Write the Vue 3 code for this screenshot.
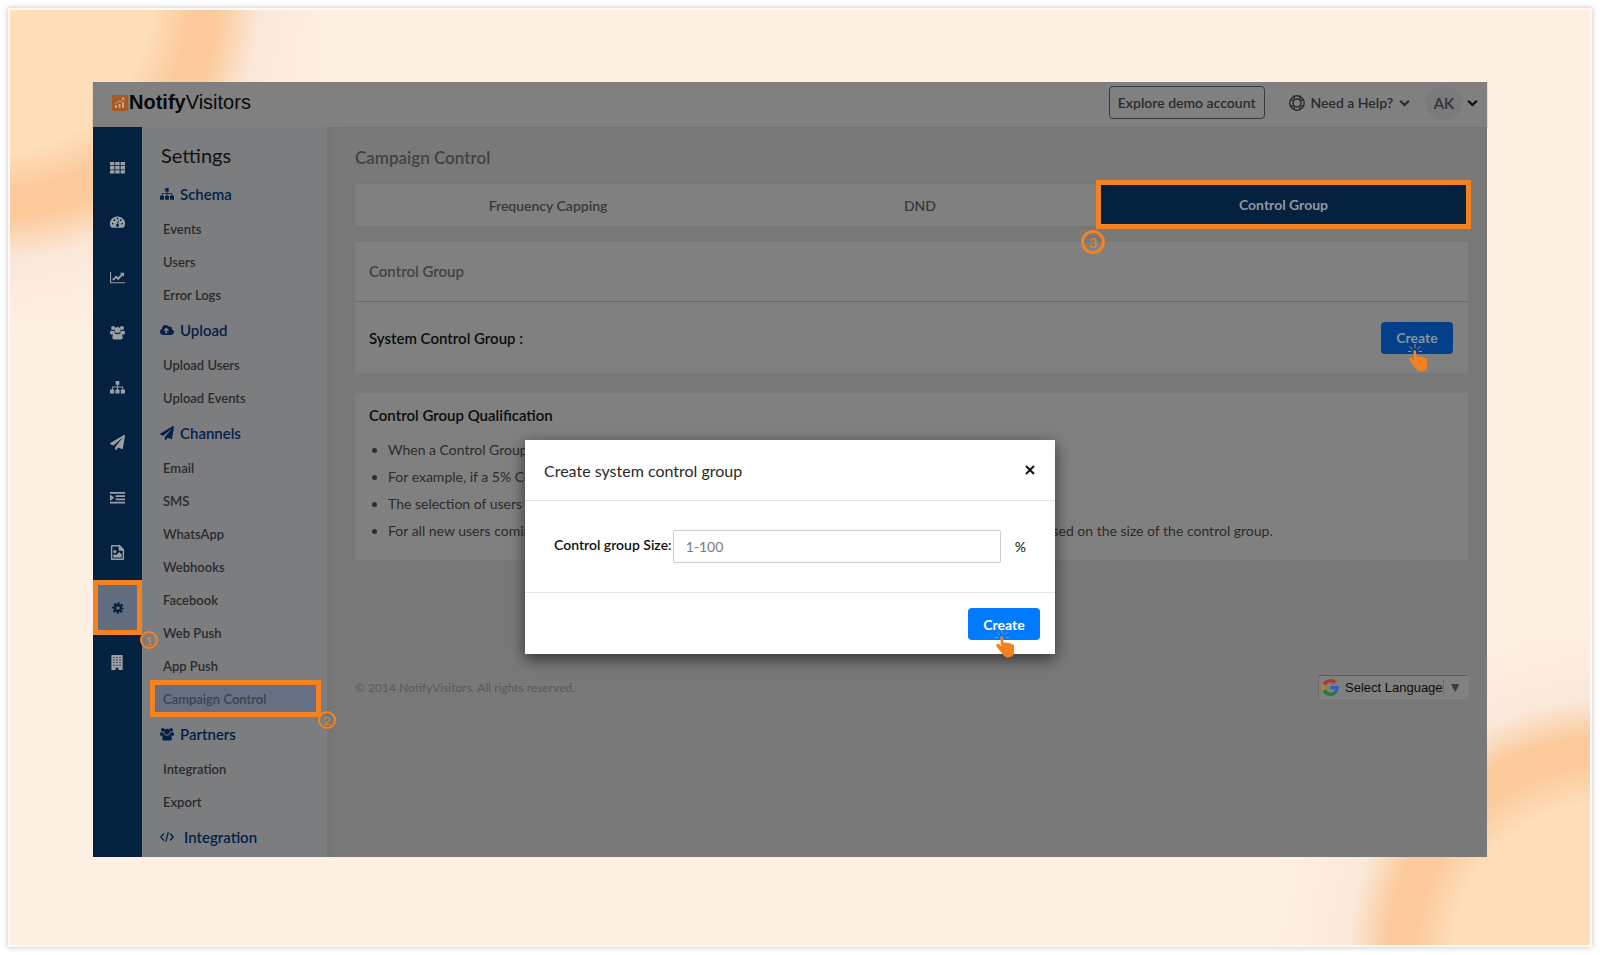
<script setup>
import { ref } from "vue";

const railItems = [
  { icon: "grid", label: "Apps" },
  { icon: "gauge", label: "Dashboard" },
  { icon: "chart", label: "Analytics" },
  { icon: "users", label: "Users" },
  { icon: "sitemap", label: "Segments" },
  { icon: "plane", label: "Campaigns" },
  { icon: "indent", label: "Journeys" },
  { icon: "image", label: "Content" },
  { icon: "gear", label: "Settings" },
  { icon: "building", label: "Company" },
];

const menu = [
  { title: "Schema", icon: "sitemap", items: ["Events", "Users", "Error Logs"] },
  { title: "Upload", icon: "cloud", items: ["Upload Users", "Upload Events"] },
  {
    title: "Channels",
    icon: "plane",
    items: [
      "Email",
      "SMS",
      "WhatsApp",
      "Webhooks",
      "Facebook",
      "Web Push",
      "App Push",
      "Campaign Control",
    ],
  },
  { title: "Partners", icon: "users", items: ["Integration", "Export"] },
  { title: "Integration", icon: "code", items: [] },
];

const tabs = ["Frequency Capping", "DND", "Control Group"];

const activeRail = ref("gear");
const activeItem = ref("Campaign Control");
const activeTab = ref("Control Group");
const showDialog = ref(true);
const groupSize = ref("");
const language = ref("Select Language");
</script>

<template>
  <svg class="sprite" aria-hidden="true">
    <symbol id="grid" viewBox="0 0 16 16">
      <path d="M0 2h4.700v3.500H0zM5.600 2h4.700v3.500H5.600zM11.300 2H16v3.500h-4.700zM0 6.500h4.700V10H0zM5.600 6.500h4.700V10H5.600zM11.300 6.500H16V10h-4.700zM0 11h4.700v3.500H0zM5.600 11h4.700v3.500H5.600zM11.300 11H16v3.500h-4.700z" />
    </symbol>
    <symbol id="gauge" viewBox="0 0 16 16">
      <path fill-rule="evenodd" d="M8 1.500a8 7.600 0 0 0-7 11.400q.4.700 1 .7h12q.6 0 1-.7A8 7.600 0 0 0 8 1.500zM3 8.200a.9.900 0 1 1 0 1.800.9.900 0 0 1 0-1.800zM4.600 4.600a.9.900 0 1 1 0 1.800.9.900 0 0 1 0-1.800zM8 2.900a.9.900 0 1 1 0 1.800.9.900 0 0 1 0-1.800zM11.500 4.600a.9.900 0 1 1 0 1.800.9.900 0 0 1 0-1.800zM13 8.200a.9.900 0 1 1 0 1.800.9.900 0 0 1 0-1.800zM8.600 5.800l.9.200-.8 3.700a1.500 1.500 0 1 1-1-.2z" />
    </symbol>
    <symbol id="chart" viewBox="0 0 16 16">
      <path d="M0 2h1.200v11H16v1.200H0z" />
      <path d="M3 10.800l3.500-3.600 2.200 2.200 4.300-4.600" fill="none" stroke="currentColor" stroke-width="2" />
      <path d="M10.500 3H15v4.500z" />
    </symbol>
    <symbol id="users" viewBox="0 0 16 16">
      <circle cx="3.300" cy="3.200" r="2.200" />
      <circle cx="12.700" cy="3.200" r="2.200" />
      <circle cx="8" cy="5.300" r="3.200" />
      <path d="M0 8.800c0-2 .5-3 1.500-3 .9.700 2 .8 3 .4 0 1.100.3 1.900 1 2.600-1.200 0-2 .4-2.600 1.200H1.300C.5 10 0 9.600 0 8.800zM16 8.800c0-2-.5-3-1.500-3-.9.700-2 .8-3 .4 0 1.100-.3 1.900-1 2.600 1.200 0 2 .4 2.600 1.200h1.600c.8 0 1.300-.4 1.300-1.200zM2.500 13.400c0-2.800.8-4.600 2.500-4.600 1.800 1.300 4.200 1.300 6 0 1.700 0 2.500 1.800 2.500 4.600 0 1.300-.8 2.100-2 2.100h-7c-1.200 0-2-.8-2-2.100z" />
    </symbol>
    <symbol id="sitemap" viewBox="0 0 16 16">
      <path d="M6 1h4v4H8.500v2H14v3h2v4.500h-4.500V10H13V8H8.500v2h1.700v4.500H5.800V10h1.700V8H3v2h1.500v4.500H0V10h2V7h5.500V5H6z" />
    </symbol>
    <symbol id="plane" viewBox="0 0 512 512">
      <path d="M476 3.200L12.500 270.600c-18.100 10.400-15.800 35.600 2.200 43.200L121 358.400l287.300-253.200c5.500-4.900 13.300 2.600 8.600 8.300L176 407v80.500c0 23.600 28.500 32.900 42.500 15.800L282 426l124.600 52.200c14.200 6 30.400-2.900 33-18.200l72-432C515 7.800 493.300-6.800 476 3.200z" />
    </symbol>
    <symbol id="indent" viewBox="0 0 16 16">
      <path d="M0 2h16v2H0zM6 5.500h10v2H6zM6 9h10v2H6zM0 12.500h16v2H0zM0 4.800l4.600 3.400L0 11.600z" />
    </symbol>
    <symbol id="image" viewBox="0 0 16 16">
      <path fill-rule="evenodd" d="M2 0h8.500L15 4.500V15q0 1-1 1H2q-1 0-1-1V1q0-1 1-1zM2.500 1.500v13h11V6H9.200V1.500z" />
      <circle cx="5.200" cy="7" r="1.700" />
      <path d="M3.500 13.200v-2l1.700-1.600 1.300 1.300L9.800 7.500l2.700 2.700v3z" />
    </symbol>
    <symbol id="gear" viewBox="0 0 16 16">
      <circle cx="8" cy="8" r="4" fill="none" stroke="currentColor" stroke-width="3.200" />
      <circle cx="8" cy="8" r="6.400" fill="none" stroke="currentColor" stroke-width="2.800" stroke-dasharray="2.800 2.226" stroke-dashoffset="1.400" />
    </symbol>
    <symbol id="building" viewBox="0 0 16 16">
      <path fill-rule="evenodd" d="M1.500 0h12v16H9v-2.500H6V16H1.500zM3.500 2v1h1.500V2zM6.700 2v1h1.500V2zM10 2v1h1.500V2zM3.500 4.800v1h1.500v-1zM6.700 4.800v1h1.500v-1zM10 4.800v1h1.500v-1zM3.500 7.600v1h1.500v-1zM6.700 7.600v1h1.500v-1zM10 7.600v1h1.500v-1zM3.500 10.400v1h1.500v-1zM6.700 10.400v1h1.500v-1zM10 10.400v1h1.500v-1z" />
    </symbol>
    <symbol id="cloud" viewBox="0 0 640 512">
      <path d="M537.600 226.600c4.100-10.700 6.400-22.400 6.400-34.600 0-53-43-96-96-96-19.700 0-38.100 6-53.300 16.200C367 64.200 315.300 32 256 32c-88.400 0-160 71.600-160 160 0 2.700.1 5.400.2 8.100C40.200 219.800 0 273.200 0 336c0 79.500 64.500 144 144 144h368c70.700 0 128-57.300 128-128 0-61.900-44-113.600-102.400-125.400zM393.400 288H328v112c0 8.800-7.200 16-16 16h-48c-8.800 0-16-7.200-16-16V288h-65.400c-14.300 0-21.400-17.200-11.300-27.300l105.400-105.400c6.200-6.200 16.400-6.200 22.600 0l105.400 105.400c10.100 10.100 2.900 27.300-11.300 27.300z" />
    </symbol>
    <symbol id="code" viewBox="0 0 16 16">
      <path d="M4.500 4L1 8l3.500 4M11.500 4L15 8l-3.500 4M9.500 2.500l-3 11" fill="none" stroke="currentColor" stroke-width="1.500" />
    </symbol>
    <symbol id="chevron" viewBox="0 0 12 8">
      <path d="M1.300 1.500L6 6.200l4.700-4.700" fill="none" stroke="currentColor" stroke-width="2.400" />
    </symbol>
    <symbol id="lifering" viewBox="0 0 16 16">
      <g fill="none" stroke="currentColor">
        <circle cx="8" cy="8" r="7.200" stroke-width="1.500" />
        <circle cx="8" cy="8" r="4" stroke-width="1.500" />
        <path d="M5.200 5.200v-4M10.800 5.200v-4M5.200 14.800v-4M10.800 14.800v-4M1.200 5.200h4M1.200 10.800h4M10.800 5.200h4M10.800 10.800h4" stroke-width="1.200" />
      </g>
    </symbol>
    <symbol id="hand" viewBox="0 0 20 28">
      <path d="M7 0v4M1.500 2.500l3 2.500M12.500 2.500L9.500 5M0 7.500h3.500M14 7.500h-3.500" fill="none" stroke="#b98a62" stroke-width="1" />
      <path fill="#f58220" d="M5.400 7.300c.2-1.500 2.400-1.500 2.600 0l.7 6c.3-1.300 2.300-1.300 2.700 0 .5-1 2.300-.9 2.700.3.700-.8 2.400-.4 2.600.9.900-.7 2.300 0 2.300 1.300v6.300c0 3.400-2.300 5.400-5.600 5.400-2.700 0-4.300-.8-5.600-3.200L2 17.300c-.8-1.500-.7-2.600 0-3.200.9-.6 2.200-.1 2.800 1l1 1.500z" />
    </symbol>
  </svg>

  <div class="page">
    <div class="app">
      <header class="topbar">
        <a href="#" class="logo">
          <svg class="logo-mark" viewBox="0 0 16 16" aria-hidden="true">
            <rect width="16" height="16" rx="1" fill="#a8591d" />
            <path d="M3 13v-3h2v3zM6.500 13V9h2v4zM10 13V7h2v6z" fill="#b9a594" />
            <path d="M3 9l4-3 1.500 1L12 3M9.500 3H12v2.500" fill="none" stroke="#b9a594" />
          </svg>
          <span><b>Notify</b>Visitors</span>
        </a>
        <div class="topbar-right">
          <button class="demo-button">Explore demo account</button>
          <button class="help-button">
            <svg class="icon-16"><use href="#lifering" /></svg>
            Need a Help?
            <svg class="chevron"><use href="#chevron" /></svg>
          </button>
          <button class="account-button">
            <span class="avatar">AK</span>
            <svg class="chevron"><use href="#chevron" /></svg>
          </button>
        </div>
      </header>

      <div class="body">
        <nav class="rail">
          <button
            v-for="item in railItems"
            :key="item.icon"
            class="rail-item"
            :class="{ active: activeRail === item.icon }"
            :aria-label="item.label"
            @click="activeRail = item.icon"
          >
            <svg class="rail-icon"><use :href="'#' + item.icon" /></svg>
            <span v-if="activeRail === item.icon" class="step step-one">1</span>
          </button>
        </nav>

        <aside class="sidebar">
          <h1 class="sidebar-title">Settings</h1>
          <section v-for="group in menu" :key="group.title">
            <h2 class="group-title" :class="group.icon">
              <svg class="group-icon"><use :href="'#' + group.icon" /></svg>
              {{ group.title }}
            </h2>
            <a
              v-for="item in group.items"
              :key="item"
              href="#"
              class="menu-item"
              :class="{ active: activeItem === item }"
              @click.prevent="activeItem = item"
            >
              {{ item }}
              <span v-if="activeItem === item" class="step step-two">2</span>
            </a>
          </section>
        </aside>
        <div class="scrollbar"></div>

        <main class="content">
          <h2 class="page-title">Campaign Control</h2>
          <div class="tabs">
            <button
              v-for="tab in tabs"
              :key="tab"
              class="tab"
              :class="{ active: activeTab === tab }"
              @click="activeTab = tab"
            >
              {{ tab }}
              <span v-if="activeTab === tab" class="step step-three">3</span>
            </button>
          </div>

          <section class="card">
            <h3 class="card-title">Control Group</h3>
            <div class="card-row">
              <strong>System Control Group :</strong>
              <button class="create-button dimmed" @click="showDialog = true">
                Create
                <svg class="hand"><use href="#hand" /></svg>
              </button>
            </div>
          </section>

          <section class="card qualification">
            <h3>Control Group Qualification</h3>
            <ul>
              <li>When a Control Group</li>
              <li>For example, if a 5% Co</li>
              <li>The selection of users is</li>
              <li>
                <div class="long-line">
                  <span>For all new users coming</span>
                  <span>based on the size of the control group.</span>
                </div>
              </li>
            </ul>
          </section>

          <footer class="footer">
            <span>© 2014 NotifyVisitors. All rights reserved.</span>
            <div class="language">
              <svg class="google" viewBox="0 0 48 48" aria-hidden="true">
                <path fill="#b8352c" d="M24 9.500c3.540 0 6.710 1.220 9.210 3.600l6.850-6.850C35.900 2.380 30.470 0 24 0 14.620 0 6.510 5.380 2.560 13.220l7.980 6.190C12.430 13.720 17.740 9.500 24 9.500z" />
                <path fill="#2e5fb5" d="M46.980 24.550c0-1.570-.15-3.090-.38-4.550H24v9.020h12.940c-.58 2.960-2.260 5.480-4.780 7.180l7.730 6c4.510-4.180 7.090-10.360 7.090-17.650z" />
                <path fill="#b08a08" d="M10.530 28.590c-.48-1.450-.76-2.990-.76-4.590s.27-3.140.76-4.590l-7.980-6.190C.92 16.460 0 20.120 0 24c0 3.880.92 7.540 2.560 10.780l7.970-6.190z" />
                <path fill="#267a3a" d="M24 48c6.480 0 11.930-2.130 15.890-5.810l-7.730-6c-2.150 1.450-4.920 2.300-8.160 2.300-6.260 0-11.570-4.220-13.470-9.910l-7.980 6.190C6.510 42.620 14.620 48 24 48z" />
              </svg>
              <select v-model="language" aria-label="Language">
                <option>Select Language</option>
              </select>
              <span class="language-arrow">▼</span>
            </div>
          </footer>
        </main>
      </div>

      <div v-if="showDialog" class="dialog" role="dialog" aria-labelledby="dialog-title">
        <div class="dialog-header">
          <h2 id="dialog-title">Create system control group</h2>
          <button class="close-button" aria-label="Close" @click="showDialog = false">
            <svg viewBox="0 0 10 10"><path d="M1 1l8 8M9 1L1 9" stroke="#111" stroke-width="2" /></svg>
          </button>
        </div>
        <div class="dialog-body">
          <label for="size">Control group Size:</label>
          <input id="size" v-model="groupSize" type="text" placeholder="1-100" />
          <span class="percent">%</span>
        </div>
        <div class="dialog-footer">
          <button class="create-button" @click="showDialog = false">
            Create
            <svg class="hand"><use href="#hand" /></svg>
          </button>
        </div>
      </div>
    </div>
  </div>
</template>

<style>
body {
  margin: 0;
  background: #fff;
}
</style>

<style scoped>
* {
  box-sizing: border-box;
}

button {
  border: none;
  background: none;
  padding: 0;
  font: inherit;
  color: inherit;
  cursor: pointer;
}

a {
  color: inherit;
  text-decoration: none;
}

h1,
h2,
h3,
ul {
  margin: 0;
}

svg {
  fill: currentColor;
}

.sprite {
  position: absolute;
  width: 0;
  height: 0;
}

.page {
  margin: 8px;
  padding: 72px 103px 88px 83px;
  border: 2px solid #fffaf5;
  box-shadow: 0 0 6px rgba(0, 0, 0, 0.25);
  font-family: Lato, "Liberation Sans", sans-serif;
  font-size: 14px;
  background:
    radial-gradient(circle at -9px -9px, #fedebb 150px, #fcca9b 190px, #fcca9b 216px, #fae9da 260px, rgba(254, 240, 228, 0) 340px),
    radial-gradient(circle at calc(100% + 14px) calc(100% + 9px), #fedebb 150px, #fcca9b 190px, #fcca9b 216px, #fae9da 256px, rgba(254, 240, 228, 0) 335px),
    #fff0e4;
}

.app {
  position: relative;
  background: #797979;
}

.topbar {
  height: 45px;
  display: flex;
  align-items: center;
  justify-content: space-between;
  padding: 0 9px 4px 19px;
  background: #808080;
  color: #292b2e;
  box-shadow: 0 1px 1px #737373;
}

.logo {
  display: flex;
  align-items: center;
  gap: 1px;
  font-family: "Liberation Sans", sans-serif;
  font-size: 20px;
  color: #080808;
}

.logo-mark {
  width: 16px;
  height: 16px;
}

.topbar-right {
  display: flex;
  align-items: center;
  font-weight: 600;
}

.demo-button {
  height: 33px;
  padding: 0 8px;
  border: 1px solid #333a40;
  border-radius: 4px;
}

.help-button {
  display: flex;
  align-items: center;
  gap: 6px;
  margin-left: 24px;
}

.icon-16 {
  width: 16px;
  height: 16px;
}

.chevron {
  width: 11px;
  height: 8px;
}

.account-button {
  display: flex;
  align-items: center;
  gap: 5px;
  margin-left: 16px;
  color: #0b0c0d;
}

.avatar {
  width: 36px;
  height: 34px;
  line-height: 34px;
  border-radius: 50%;
  background: #7b7b7d;
  color: #303236;
  font-size: 15px;
}

.body {
  display: flex;
}

.rail {
  width: 49px;
  padding-top: 13px;
  background: #04213f;
  color: #9b9fa3;
}

.rail-item {
  position: relative;
  width: 100%;
  height: 55px;
  display: flex;
  align-items: center;
  justify-content: center;
}

.rail-item.active {
  border: 5px solid #f58220;
  background: #636d80;
  color: #04213f;
}

.rail-icon {
  width: 15px;
  height: 15px;
}

.rail-item.active .rail-icon {
  width: 12px;
  height: 12px;
}

.step {
  position: absolute;
  z-index: 1;
  display: flex;
  align-items: center;
  justify-content: center;
  width: 18px;
  height: 18px;
  border: 2px solid #f58220;
  border-radius: 50%;
  color: #f58220;
  font-size: 12px;
  font-weight: 400;
}

.step-one {
  right: -21px;
  bottom: -19px;
}

.step-two {
  right: -20px;
  bottom: -17px;
}

.step-three {
  left: -20px;
  bottom: -30px;
  width: 24px;
  height: 24px;
  border-width: 3px;
  font-size: 14px;
}

.sidebar {
  width: 185px;
  padding: 10px 0 2px;
  background: #7c7d7f;
  color: #2a2b2d;
}

.sidebar-title {
  padding: 0 19px 1px;
  color: #111;
  font-size: 20px;
  font-weight: 400;
  line-height: 37px;
}

.group-title {
  display: flex;
  align-items: center;
  gap: 6px;
  height: 37px;
  padding-left: 18px;
  color: #04204a;
  font-size: 15px;
  font-weight: 600;
}

.group-title.code {
  gap: 10px;
}

.group-icon {
  width: 14px;
  height: 14px;
}

.menu-item {
  position: relative;
  display: flex;
  align-items: center;
  height: 33px;
  padding-left: 21px;
  font-size: 13px;
  font-weight: 600;
}

.menu-item.active {
  height: 37px;
  margin: -2px 6px -2px 8px;
  padding-left: 8px;
  border: 5px solid #f58220;
  background: #667082;
  color: #3c4350;
}

.scrollbar {
  width: 12px;
  background: linear-gradient(to right, #727373, #777 60%, #797979);
}

.content {
  flex: 1;
  padding: 20px 19px 0 16px;
  color: #2c2c2c;
}

.page-title {
  color: #424242;
  font-size: 17px;
  font-weight: 600;
  line-height: 22px;
}

.tabs {
  display: grid;
  grid-template-columns: 386fr 358fr 369fr;
  margin-top: 15px;
  background: #808080;
  box-shadow: 0 0 5px #737373;
}

.tab {
  height: 42px;
  color: #393939;
  font-weight: 600;
}

.tab.active {
  position: relative;
  height: 49px;
  margin: -4px -3px -3px;
  border: 5px solid #f58220;
  background: #04213f;
  color: #93979c;
  font-weight: 700;
}

.card {
  margin-top: 16px;
  background: #808080;
  box-shadow: 0 0 2px #797979;
}

.card-title {
  height: 60px;
  padding: 0 14px;
  border-bottom: 1px solid #6b6b6b;
  color: #424242;
  font-size: 15px;
  font-weight: 600;
  line-height: 58px;
}

.card-row {
  display: flex;
  align-items: center;
  justify-content: space-between;
  height: 71px;
  padding: 0 15px 0 14px;
  color: #0c0c0c;
  font-size: 15px;
}

.card-row strong {
  font-weight: 600;
}

.create-button {
  position: relative;
  width: 72px;
  height: 32px;
  border-radius: 4px;
  background: #007bff;
  color: #fff;
  font-size: 14px;
  font-weight: 700;
}

.create-button.dimmed {
  background: #04408a;
  color: #8b939d;
}

.hand {
  position: absolute;
  top: 22px;
  left: 27px;
  width: 20px;
  height: 28px;
}

.qualification {
  margin-top: 20px;
  padding: 11px 14px 16px;
}

.qualification h3 {
  color: #0c0c0c;
  font-size: 15px;
  font-weight: 600;
  line-height: 22px;
}

.qualification ul {
  padding: 10px 0 0 19px;
  line-height: 27px;
}

.long-line {
  display: flex;
  justify-content: space-between;
  width: 83%;
}

.footer {
  display: flex;
  align-items: center;
  justify-content: space-between;
  margin-top: 115px;
  color: #595959;
  font-size: 12px;
}

.language {
  display: flex;
  align-items: center;
  height: 24px;
  width: 150px;
  padding: 0 5px 0 3px;
  border: 1px solid #868686;
  border-top-color: #5c5c5c;
  border-left-color: #6c6c6c;
  background: #808080;
}

.google {
  width: 17px;
  height: 17px;
}

.language select {
  flex: 1;
  appearance: none;
  border: none;
  margin: 0;
  padding: 0 0 0 6px;
  background: transparent;
  color: #0c0c0c;
  font-family: "Liberation Sans", sans-serif;
  font-size: 13px;
}

.language-arrow {
  padding-left: 4px;
  border-left: 1px solid #6b6b6b;
  color: #3b3b3b;
  font-size: 14px;
  line-height: 14px;
}

.dialog {
  position: absolute;
  top: 358px;
  left: 50%;
  width: 530px;
  transform: translateX(-50%);
  background: #fff;
  box-shadow: 0 5px 15px rgba(0, 0, 0, 0.6);
  color: #111;
}

.dialog-header {
  display: flex;
  align-items: center;
  justify-content: space-between;
  height: 61px;
  padding: 0 20px 0 19px;
  border-bottom: 1px solid #e3e5e7;
}

.dialog-header h2 {
  color: #2a2a2a;
  font-size: 16px;
  font-weight: 400;
}

.close-button svg {
  display: block;
  width: 10px;
  height: 10px;
}

.dialog-body {
  display: flex;
  align-items: center;
  height: 91px;
  padding: 0 29px;
}

.dialog-body label {
  margin-right: 1px;
  padding-bottom: 4px;
  font-weight: 600;
}

.dialog-body input {
  flex: 1;
  min-width: 0;
  height: 33px;
  padding: 0 12px;
  border: 1px solid #c9cdd1;
  border-radius: 2px;
  color: #495057;
  font-family: inherit;
  font-size: 14px;
}

.dialog-body input::placeholder {
  color: #767c82;
}

.percent {
  margin-left: 14px;
}

.dialog-footer {
  display: flex;
  justify-content: flex-end;
  padding: 15px 15px 14px;
  border-top: 1px solid #e3e5e7;
}
</style>
